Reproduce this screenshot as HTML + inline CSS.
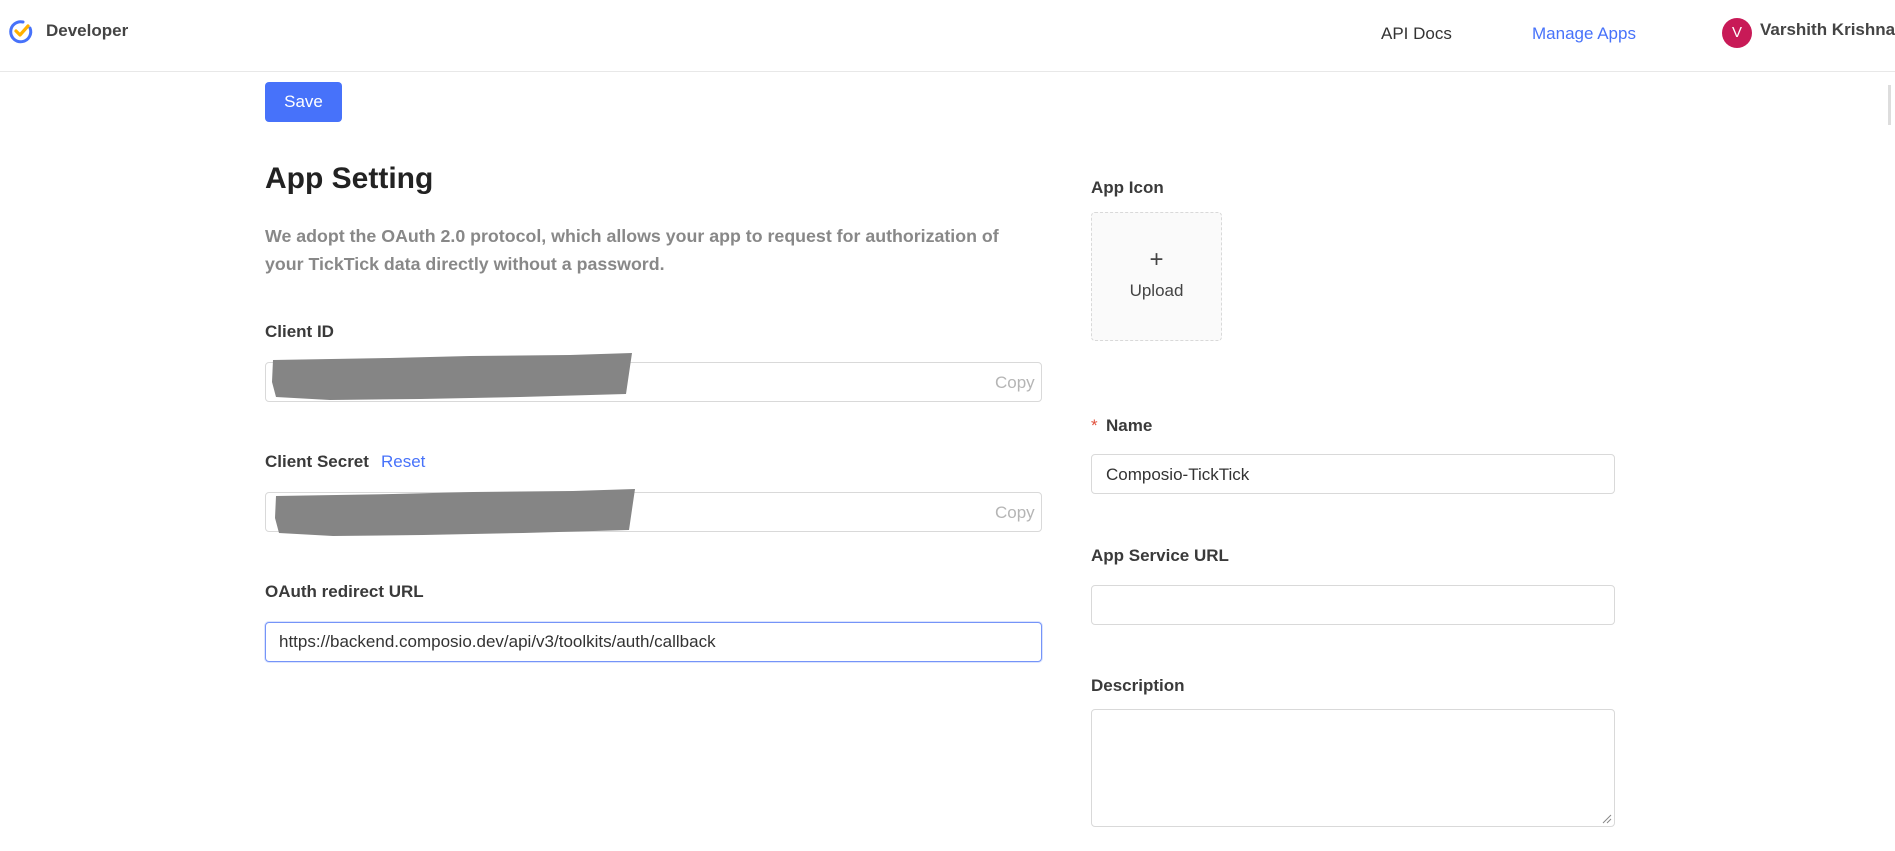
<!DOCTYPE html>
<html><head><meta charset="utf-8"><style>
*{box-sizing:border-box;margin:0;padding:0}
body{width:1895px;height:851px;overflow:hidden;background:#fff;font-family:"Liberation Sans",sans-serif;color:#333;position:relative}
.a{position:absolute;white-space:nowrap}
.hdr{left:0;top:0;width:1895px;height:72px;border-bottom:1px solid #e8e8e8}
.lbl{font-size:17px;font-weight:bold;color:#3a3a3a}
.inp{border:1px solid #d9d9d9;border-radius:4px;background:#fff}
.copy{font-size:17px;color:#b5b5b5}
</style></head><body>
<div class="a hdr"></div>
<svg class="a" style="left:8px;top:19px" width="26" height="26" viewBox="0 0 26 26"><path d="M22 9 A10 10 0 1 1 15 3" fill="none" stroke="#4772fa" stroke-width="3" stroke-linecap="round"/><path d="M8 12 L12 16 L20 7" fill="none" stroke="#ffb000" stroke-width="3.2" stroke-linecap="round" stroke-linejoin="round"/></svg>
<div class="a" style="left:46px;top:21px;font-size:17px;font-weight:bold;color:#444">Developer</div>
<div class="a" style="left:1381px;top:24px;font-size:17px;color:#333">API Docs</div>
<div class="a" style="left:1532px;top:24px;font-size:17px;color:#4772fa">Manage Apps</div>
<div class="a" style="left:1722px;top:18px;width:30px;height:30px;border-radius:50%;background:#c81a57;color:#fff;font-size:15px;text-align:center;line-height:30px">V</div>
<div class="a" style="left:1760px;top:20px;font-size:17px;font-weight:bold;color:#444">Varshith Krishna</div>
<div class="a" style="left:1888px;top:85px;width:3px;height:40px;background:#ddd"></div>

<div class="a" style="left:265px;top:82px;width:77px;height:40px;background:#4772fa;border-radius:4px;color:#fff;font-size:17px;text-align:center;line-height:40px">Save</div>
<div class="a" style="left:265px;top:162px;font-size:30px;font-weight:bold;color:#222">App Setting</div>
<div class="a" style="left:265px;top:222px;font-size:17.8px;line-height:28px;color:#888;font-weight:bold">We adopt the OAuth 2.0 protocol, which allows your app to request for authorization of<br>your TickTick data directly without a password.</div>

<div class="a lbl" style="left:265px;top:322px">Client ID</div>
<div class="a inp" style="left:265px;top:362px;width:777px;height:40px"></div>
<div class="a copy" style="left:995px;top:373px">Copy</div>
<svg class="a" style="left:270px;top:352px" width="370" height="52"><path d="M3 8 L120 6 L200 4 L300 3 L362 1 L356 42 L250 45 L150 47 L60 48 L6 45 L2 30 Z" fill="#858585"/></svg>

<div class="a lbl" style="left:265px;top:452px">Client Secret</div>
<div class="a" style="left:381px;top:452px;font-size:17px;color:#4772fa">Reset</div>
<div class="a inp" style="left:265px;top:492px;width:777px;height:40px"></div>
<div class="a copy" style="left:995px;top:503px">Copy</div>
<svg class="a" style="left:273px;top:488px" width="370" height="52"><path d="M3 8 L120 6 L200 4 L300 3 L362 1 L356 42 L250 45 L150 47 L60 48 L6 45 L2 30 Z" fill="#858585"/></svg>

<div class="a lbl" style="left:265px;top:582px">OAuth redirect URL</div>
<div class="a inp" style="left:265px;top:622px;width:777px;height:40px;border-color:#7594f8;box-shadow:0 0 0 1px #dbe4fe"></div>
<div class="a" style="left:279px;top:632px;font-size:17px;color:#333">https://backend.composio.dev/api/v3/toolkits/auth/callback</div>

<div class="a lbl" style="left:1091px;top:178px">App Icon</div>
<div class="a" style="left:1091px;top:212px;width:131px;height:129px;border:1px dashed #d9d9d9;border-radius:4px;background:#fafafa"></div>
<div class="a" style="left:1091px;top:248px;width:131px;text-align:center;font-size:24px;color:#444;line-height:24px">+</div>
<div class="a" style="left:1091px;top:281px;width:131px;text-align:center;font-size:17px;color:#444">Upload</div>

<div class="a" style="left:1091px;top:416px;font-size:17px;color:#e0503c">*</div>
<div class="a lbl" style="left:1106px;top:416px">Name</div>
<div class="a inp" style="left:1091px;top:454px;width:524px;height:40px"></div>
<div class="a" style="left:1106px;top:465px;font-size:17px;color:#333">Composio-TickTick</div>

<div class="a lbl" style="left:1091px;top:546px">App Service URL</div>
<div class="a inp" style="left:1091px;top:585px;width:524px;height:40px"></div>

<div class="a lbl" style="left:1091px;top:676px">Description</div>
<div class="a inp" style="left:1091px;top:709px;width:524px;height:118px"></div>
<svg class="a" style="left:1602px;top:814px" width="10" height="10"><path d="M1 9L9 1M5 9L9 5" stroke="#888" stroke-width="1"/></svg>
</body></html>
